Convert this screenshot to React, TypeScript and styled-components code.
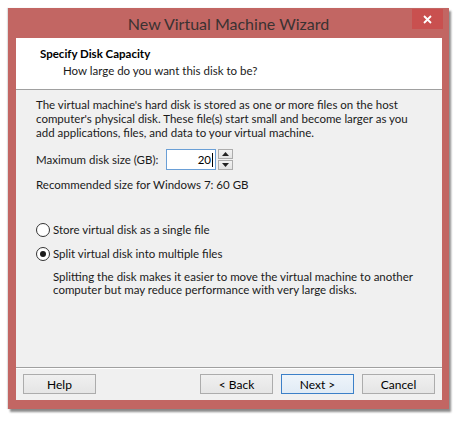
import * as React from "react"
import styled, { createGlobalStyle } from "styled-components"

const GlobalStyle = createGlobalStyle`
  html, body {
    margin: 0;
    padding: 0;
    background: #ffffff;
  }
  body {
    font-family: Lato, "Open Sans", "DejaVu Sans", sans-serif;
  }
`

const Page = styled.div`
  width: 462px;
  height: 422px;
  padding: 8px 0 0 8px;
  box-sizing: border-box;
`

const Window = styled.div`
  width: 441px;
  height: 401px;
  background: #c26663;
  display: flex;
  flex-direction: column;
  box-shadow: 2px 3px 2px rgba(0, 0, 0, 0.45), -1px 0 1px rgba(0, 0, 0, 0.12);
`

const TitleBar = styled.div`
  height: 30px;
  display: flex;
  align-items: center;
  justify-content: center;
  position: relative;
  font-size: 16px;
  color: #3a3232;
`

const CloseButton = styled.div`
  position: absolute;
  top: 1px;
  right: 6px;
  width: 31px;
  height: 20px;
  background: #c9504f;
  display: flex;
  align-items: center;
  justify-content: center;
`

const Client = styled.div`
  flex: 1;
  margin: 0 7px 9px 8px;
  background: #f0f0f0;
  display: flex;
  flex-direction: column;
  font-size: 11.5px;
  color: #1a1a1a;
  white-space: nowrap;
`

const Header = styled.div`
  height: 52px;
  background: #ffffff;
  border-bottom: 1px solid #a0a0a0;
  box-sizing: border-box;
  padding: 8px 0 0 24px;
`

const HeaderTitle = styled.div`
  font-weight: bold;
  line-height: 15px;
  color: #000;
`

const HeaderSub = styled.div`
  padding-left: 23px;
  margin-top: 2px;
  line-height: 15px;
`

const Body = styled.div`
  flex: 1;
  padding: 8px 20px 0 20px;
  display: flex;
  flex-direction: column;
`

const Paragraph = styled.p<{ $indent?: number; $leading?: number }>`
  margin: 0;
  line-height: ${(p) => p.$leading ?? 14}px;
  padding-left: ${(p) => p.$indent ?? 0}px;
`

const SizeRow = styled.div`
  display: flex;
  align-items: center;
  margin-top: 9px;
  height: 21px;
`

const SizeLabel = styled.span`
  width: 130px;
`

const Spin = styled.div`
  display: flex;
  align-items: stretch;
  height: 21px;
  gap: 2px;
`

const SpinInput = styled.div`
  width: 46px;
  border: 1px solid #6a9fd6;
  background: #fff;
  display: flex;
  align-items: center;
  justify-content: flex-end;
  padding-right: 2px;
  color: #000;
`

const Caret = styled.span`
  display: inline-block;
  width: 1px;
  height: 14px;
  background: #000;
  margin-left: 1px;
`

const SpinButtons = styled.div`
  display: flex;
  flex-direction: column;
  gap: 1px;
  width: 15px;
`

const SpinButton = styled.div`
  flex: 1;
  border: 1px solid #acacac;
  background: linear-gradient(#f2f2f2, #e3e3e3);
  display: flex;
  align-items: center;
  justify-content: center;
`

const Recommended = styled.div`
  margin-top: 8px;
  line-height: 14px;
`

const Options = styled.div`
  margin-top: 31px;
  display: flex;
  flex-direction: column;
  gap: 10px;
`

const RadioRow = styled.label`
  display: flex;
  align-items: center;
  gap: 3px;
  line-height: 14px;
`

const RadioCircle = styled.span<{ $checked?: boolean }>`
  width: 12px;
  height: 12px;
  border-radius: 50%;
  border: 1px solid #333;
  background: #fff;
  display: flex;
  align-items: center;
  justify-content: center;

  &::after {
    content: "";
    width: 6px;
    height: 6px;
    border-radius: 50%;
    background: ${(p) => (p.$checked ? "#1a1a1a" : "transparent")};
  }
`

const Note = styled(Paragraph)`
  margin-top: 9px;
`

const Footer = styled.div`
  height: 32px;
  border-top: 1px solid #a0a0a0;
  box-shadow: inset 0 1px 0 #ffffff;
  display: flex;
  align-items: center;
  padding: 0 7px;
`

const Button = styled.div<{ $primary?: boolean; $gap?: number }>`
  width: 71px;
  height: 18px;
  margin-left: ${(p) => p.$gap ?? 0}px;
  border: 1px solid ${(p) => (p.$primary ? "#3c80c8" : "#acacac")};
  background: ${(p) =>
    p.$primary ? "linear-gradient(#eef4fa, #e1ebf5)" : "linear-gradient(#f0f0f0, #e5e5e5)"};
  display: flex;
  align-items: center;
  justify-content: center;
  font-size: 12px;
  color: #000;
`

const Arrow = ({ up }: { up?: boolean }) => (
  <svg width="7" height="4" viewBox="0 0 7 4">
    <path d={up ? "M0 4 L3.5 0 L7 4 Z" : "M0 0 L3.5 4 L7 0 Z"} fill="#222" />
  </svg>
)

export default function App() {
  return (
    <Page>
      <GlobalStyle />
      <Window>
        <TitleBar>
          New Virtual Machine Wizard
          <CloseButton>
            <svg width="9" height="9" viewBox="0 0 9 9">
              <path d="M1 1 L8 8 M8 1 L1 8" stroke="#fff" strokeWidth="1.8" />
            </svg>
          </CloseButton>
        </TitleBar>
        <Client>
          <Header>
            <HeaderTitle>Specify Disk Capacity</HeaderTitle>
            <HeaderSub>How large do you want this disk to be?</HeaderSub>
          </Header>
          <Body>
            <Paragraph>
              The virtual machine's hard disk is stored as one or more files on the host
              <br />
              computer's physical disk. These file(s) start small and become larger as you
              <br />
              add applications, files, and data to your virtual machine.
            </Paragraph>
            <SizeRow>
              <SizeLabel>Maximum disk size (GB):</SizeLabel>
              <Spin>
                <SpinInput>
                  20
                  <Caret />
                </SpinInput>
                <SpinButtons>
                  <SpinButton>
                    <Arrow up />
                  </SpinButton>
                  <SpinButton>
                    <Arrow />
                  </SpinButton>
                </SpinButtons>
              </Spin>
            </SizeRow>
            <Recommended>Recommended size for Windows 7: 60 GB</Recommended>
            <Options>
              <RadioRow>
                <RadioCircle />
                Store virtual disk as a single file
              </RadioRow>
              <RadioRow>
                <RadioCircle $checked />
                Split virtual disk into multiple files
              </RadioRow>
            </Options>
            <Note $indent={17} $leading={13}>
              Splitting the disk makes it easier to move the virtual machine to another
              <br />
              computer but may reduce performance with very large disks.
            </Note>
          </Body>
          <Footer>
            <Button>Help</Button>
            <Button $gap={104}>&lt; Back</Button>
            <Button $gap={8} $primary>
              Next &gt;
            </Button>
            <Button $gap={8}>Cancel</Button>
          </Footer>
        </Client>
      </Window>
    </Page>
  )
}
